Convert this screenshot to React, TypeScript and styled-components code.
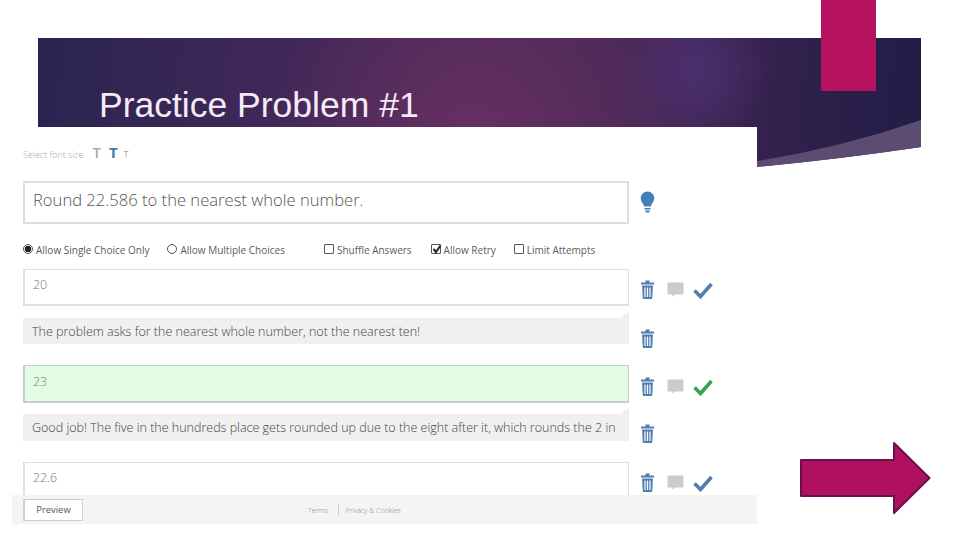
import React from "react";
import styled, { createGlobalStyle } from "styled-components";

const Global = createGlobalStyle`
  html, body { margin: 0; padding: 0; background: #fff; }
  body { font-family: "Open Sans", "Liberation Sans", sans-serif; }
  #root { width: 960px; height: 540px; overflow: hidden; }
`;

const Slide = styled.div`
  position: relative;
  width: 960px;
  height: 540px;
  overflow: hidden;
  background: #fff;
`;
const BannerArt = styled.svg`
  position: absolute;
  left: 0;
  top: 0;
`;
const TitleBar = styled.header`
  position: relative;
  height: 127px;
  box-sizing: border-box;
  padding: 83px 0 0 99px;
`;
const Title = styled.h1`
  margin: 0;
  font: 400 35.5px/44px "Liberation Sans", Arial, sans-serif;
  color: #f5ebf8;
  white-space: nowrap;
`;
const Tab = styled.div`
  position: absolute;
  left: 821px;
  top: 0;
  width: 55px;
  height: 91px;
  background: #b5135f;
`;
const NextArrow = styled.svg`
  position: absolute;
  left: 798px;
  top: 440px;
`;
const Panel = styled.main`
  position: relative;
  width: 745px;
  height: 397px;
  margin-left: 12px;
  background: #fff;
  display: flex;
  flex-direction: column;
`;
const Editor = styled.div`
  flex: 1;
  min-height: 0;
  overflow: hidden;
  padding: 15px 0 0 11px;
  display: flex;
  flex-direction: column;
`;
const SizeRow = styled.div`
  display: flex;
  align-items: baseline;
  height: 20px;
  color: #aeaeae;
  font-size: 9px;
  font-weight: 300;
  margin-bottom: 19px;
`;
const SizeT = styled.span<{ $size: number; $left: number; $color: string; $weight: number }>`
  margin-left: ${(p) => p.$left}px;
  font-size: ${(p) => p.$size}px;
  color: ${(p) => p.$color};
  font-weight: ${(p) => p.$weight};
  line-height: 20px;
`;
const Row = styled.div<{ $mt?: number }>`
  display: flex;
  flex: none;
  align-items: flex-start;
  margin-top: ${(p) => p.$mt ?? 0}px;
`;
const Question = styled.div`
  box-sizing: border-box;
  width: 606px;
  height: 43px;
  border: 2px solid #dedede;
  padding-left: 8px;
  font-size: 16.6px;
  font-weight: 300;
  line-height: 34px;
  color: #555;
  white-space: nowrap;
`;
const Options = styled.div`
  display: flex;
  align-items: center;
  height: 16px;
  margin-top: 19px;
  font-size: 10px;
  color: #5c5c5c;
  white-space: nowrap;
`;
const Option = styled.label<{ $at: number }>`
  display: flex;
  align-items: center;
  gap: 3px;
  margin-left: ${(p) => p.$at}px;
`;
const Radio = styled.span<{ $on?: boolean }>`
  box-sizing: border-box;
  width: 10px;
  height: 10px;
  margin-top: -2px;
  border-radius: 50%;
  border: 1px solid #555;
  background: ${(p) => (p.$on ? "radial-gradient(circle, #222 0 3px, #fff 3.6px)" : "#fff")};
`;
const Check = styled.span`
  box-sizing: border-box;
  width: 10px;
  height: 10px;
  margin-top: -2px;
  border: 1px solid #555;
  border-radius: 1px;
  background: #fff;
  position: relative;
  & > svg { position: absolute; left: 0; top: -1px; }
`;
const Answer = styled.div<{ $right?: boolean; $h: number }>`
  box-sizing: border-box;
  width: 606px;
  height: ${(p) => p.$h}px;
  flex: none;
  border: 1px solid ${(p) => (p.$right ? "#c6cfc6" : "#dfdfdf")};
  border-width: 1px 1px 2px 2px;
  background: ${(p) => (p.$right ? "#e3fde4" : "#fff")};
  padding-left: 8px;
  font-size: 12.4px;
  font-weight: 300;
  line-height: ${(p) => (p.$right ? 32 : 30)}px;
  color: #777;
`;
const Feedback = styled.div<{ $h: number }>`
  box-sizing: border-box;
  width: 606px;
  height: ${(p) => p.$h}px;
  flex: none;
  background: #f0f0f0;
  padding: 0 0 0 9px;
  font-size: 12.5px;
  font-weight: 300;
  line-height: 28px;
  color: #444;
  white-space: nowrap;
`;
const Notch = styled.span`
  position: absolute;
  left: 598px;
  width: 0;
  height: 0;
  border-left: 8px solid transparent;
  border-bottom: 7px solid #f0f0f0;
  transform: translateY(-7px);
`;
const FeedbackWrap = styled.div`
  position: relative;
  flex: none;
`;
const Icons = styled.div<{ $mt: number }>`
  display: flex;
  align-items: flex-start;
  margin: ${(p) => p.$mt}px 0 0 11px;
  height: 20px;
`;
const IconGap = styled.span<{ $w: number; $mt: number }>`
  display: block;
  margin: ${(p) => p.$mt}px 0 0 ${(p) => p.$w}px;
`;
const Footer = styled.footer`
  flex: none;
  height: 29px;
  background: #f4f4f4;
  padding-left: 11px;
  display: flex;
  align-items: center;
`;
const Preview = styled.button`
  box-sizing: border-box;
  width: 60px;
  height: 22px;
  padding: 0;
  background: #fff;
  border: 1px solid #cfcfcf;
  border-left-width: 2px;
  font: 400 9.4px "Open Sans", sans-serif;
  color: #555;
`;
const Links = styled.nav`
  display: flex;
  align-items: center;
  margin-left: 225px;
  padding-top: 2px;
  font-size: 7px;
  font-weight: 300;
  color: #888;
`;
const Sep = styled.span`
  width: 1px;
  height: 11px;
  background: #ccc;
  margin: 0 7px 0 10px;
`;

const Trash = () => (
  <svg width="15" height="20" viewBox="0 0 15 20">
    <path d="M5.5 1.5h4M1 3.5h13" stroke="#4f7fae" strokeWidth="1.8" fill="none" />
    <path d="M2 5.5h11l-.9 13.5H2.900z" fill="#4f7fae" />
    <path d="M5 7.500v9.500M7.500 7.500v9.500M10 7.500v9.500" stroke="#fff" strokeWidth="1.2" />
  </svg>
);
const Bubble = () => (
  <svg width="17" height="17" viewBox="0 0 17 17">
    <path d="M1.500 1.500h14a1 1 0 0 1 1 1v10a1 1 0 0 1-1 1H8l-2.500 2.500v-2.500H1.500a1 1 0 0 1-1-1v-10a1 1 0 0 1 1-1z" fill="#cbcbcb" />
  </svg>
);
const Tick = ({ color }: { color: string }) => (
  <svg width="20" height="17" viewBox="0 0 20 17">
    <path d="M1.500 8.500l6 6L18.500 2" stroke={color} strokeWidth="3.600" fill="none" />
  </svg>
);
const Bulb = () => (
  <svg width="15" height="22" viewBox="0 0 15 22">
    <path d="M7.500 .5a6.800 6.800 0 0 1 6.800 6.800c0 3.400-2.700 5-3.300 8.200H4C3.400 12.300.7 10.700.7 7.300A6.800 6.800 0 0 1 7.500.5z" fill="#4480b8" />
    <path d="M4.500 17h6v1.500h-6zM5 19.500h5l-1 2H6z" fill="#4480b8" />
  </svg>
);
const RowIcons = ({ mt, color }: { mt: number; color: string }) => (
  <Icons $mt={mt}>
    <Trash />
    <IconGap $w={12} $mt={1}><Bubble /></IconGap>
    <IconGap $w={9} $mt={2}><Tick color={color} /></IconGap>
  </Icons>
);

export default function App() {
  return (
    <Slide>
      <Global />
      <BannerArt width="960" height="200" viewBox="0 0 960 200">
        <defs>
          <linearGradient id="base" gradientUnits="userSpaceOnUse" x1="38" y1="60" x2="921" y2="120">
            <stop offset="0" stopColor="#2a2450" />
            <stop offset="0.25" stopColor="#3f2858" />
            <stop offset="0.5" stopColor="#4f2a5b" />
            <stop offset="0.7" stopColor="#4a2958" />
            <stop offset="0.85" stopColor="#30204c" />
            <stop offset="1" stopColor="#221d47" />
          </linearGradient>
          <radialGradient id="pink" gradientUnits="userSpaceOnUse" cx="470" cy="150" r="200">
            <stop offset="0" stopColor="#6b3162" stopOpacity="0.85" />
            <stop offset="1" stopColor="#6b3162" stopOpacity="0" />
          </radialGradient>
          <radialGradient id="glow" gradientUnits="userSpaceOnUse" cx="695" cy="70" r="75">
            <stop offset="0" stopColor="#4b2f6e" stopOpacity="1" />
            <stop offset="1" stopColor="#4b2f6e" stopOpacity="0" />
          </radialGradient>
        </defs>
        <path d="M38 38H921V147Q840 159 757 167V127H38Z" fill="url(#base)" />
        <path d="M38 38H921V147Q840 159 757 167V127H38Z" fill="url(#pink)" />
        <path d="M38 38H921V147Q840 159 757 167V127H38Z" fill="url(#glow)" />
        <path d="M921 120Q840 148 757 161V167Q840 159 921 147Z" fill="#5c4c72" />
      </BannerArt>
      <Tab />
      <TitleBar>
        <Title>Practice Problem #1</Title>
      </TitleBar>
      <Panel>
        <Editor>
          <SizeRow>
            Select font size
            <SizeT $size={15} $left={9} $color="#ababab" $weight={600}>T</SizeT>
            <SizeT $size={15} $left={8} $color="#4a7ba8" $weight={700}>T</SizeT>
            <SizeT $size={9} $left={6} $color="#aaa" $weight={400}>T</SizeT>
          </SizeRow>
          <Row>
            <Question>Round 22.586 to the nearest whole number.</Question>
            <Icons $mt={10}><Bulb /></Icons>
          </Row>
          <Options>
            <Option $at={0}><Radio $on />Allow Single Choice Only</Option>
            <Option $at={18}><Radio />Allow Multiple Choices</Option>
            <Option $at={39}><Check />Shuffle Answers</Option>
            <Option $at={19}>
              <Check>
                <svg width="10" height="10" viewBox="0 0 10 10">
                  <path d="M1.500 5l2.500 3L8.500 1.500" stroke="#222" strokeWidth="2" fill="none" />
                </svg>
              </Check>
              Allow Retry
            </Option>
            <Option $at={18}><Check />Limit Attempts</Option>
          </Options>
          <Row $mt={12}>
            <Answer $h={37}>20</Answer>
            <RowIcons mt={11} color="#4f7fae" />
          </Row>
          <Row $mt={12}>
            <FeedbackWrap><Notch /><Feedback $h={26}>The problem asks for the nearest whole number, not the nearest ten!</Feedback></FeedbackWrap>
            <Icons $mt={11}><Trash /></Icons>
          </Row>
          <Row $mt={16}>
            <Answer $right $h={38}>23</Answer>
            <RowIcons mt={12} color="#36a34f" />
          </Row>
          <Row $mt={11}>
            <FeedbackWrap><Notch /><Feedback $h={27}>Good job! The five in the hundreds place gets rounded up due to the eight after it, which rounds the 2 in</Feedback></FeedbackWrap>
            <Icons $mt={10}><Trash /></Icons>
          </Row>
          <Row $mt={18}>
            <Answer $h={40}>22.6</Answer>
            <RowIcons mt={11} color="#4f7fae" />
          </Row>
        </Editor>
        <Footer>
          <Preview>Preview</Preview>
          <Links>
            Terms<Sep />Privacy &amp; Cookies
          </Links>
        </Footer>
      </Panel>
      <NextArrow width="135" height="76" viewBox="0 0 135 76">
        <path d="M3 20H96V3L131.500 38L96 73V56H3Z" fill="#b0115f" stroke="#6b0f50" strokeWidth="2" strokeLinejoin="round" />
      </NextArrow>
    </Slide>
  );
}
